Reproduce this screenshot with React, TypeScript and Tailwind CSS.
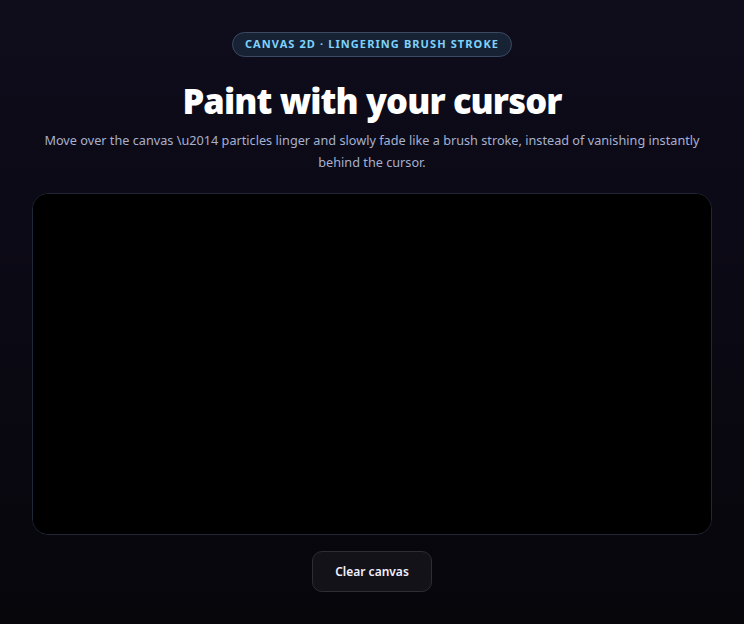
import React, { useEffect, useRef } from 'react';

const App: React.FC = () => {
    const canvasRef = useRef<HTMLCanvasElement>(null);

    const clearCanvas = () => {
        const canvas = canvasRef.current;
        if (!canvas) return;
        const ctx = canvas.getContext('2d');
        if (!ctx) return;
        ctx.fillStyle = '#000';
        ctx.fillRect(0, 0, canvas.width, canvas.height);
    };

    useEffect(() => {
        clearCanvas();
    }, []);

    return (
        <div
            className="min-h-screen w-full bg-gradient-to-b from-[#0f0c1c] to-[#07060b] text-white px-8 pt-8 pb-8"
            style={{ fontFamily: '"Noto Sans", "Open Sans", sans-serif' }}
        >
            <div className="max-w-[680px] mx-auto flex flex-col items-center">
                {/* Badge */}
                <span className="inline-flex items-center h-[25px] px-3 rounded-full border border-[#3b4a62] bg-[#182235] text-[11px] font-bold tracking-[0.1em] uppercase text-[#7dd3fc]">
                    Canvas 2D · Lingering brush stroke
                </span>

                {/* Title */}
                <h1 className="mt-[22px] text-[34.5px] leading-[44px] font-black tracking-tight text-white">
                    Paint with your cursor
                </h1>
                <p className="mt-[6px] text-[12.7px] leading-[22px] text-[#a5b1cf] text-center">
                    Move over the canvas \u2014 particles linger and slowly fade like a brush stroke, instead of vanishing instantly behind the cursor.
                </p>

                {/* Paint surface */}
                <div className="mt-[20px] w-full h-[342px] rounded-2xl border border-[#1e2836] bg-black overflow-hidden">
                    <canvas ref={canvasRef} width={680} height={340} className="block w-full h-full" />
                </div>

                <button
                    onClick={clearCanvas}
                    className="mt-4 h-[41px] px-[22px] rounded-[10px] border border-[#2e2d36] bg-[#141219] text-[12px] font-semibold text-[#f1f0ff]"
                >
                    Clear canvas
                </button>
            </div>
        </div>
    );
};

export default App;
